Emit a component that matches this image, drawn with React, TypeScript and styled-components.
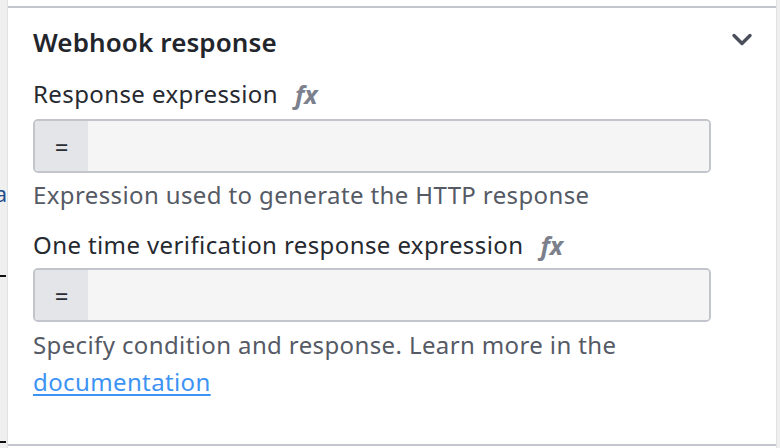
import React from 'react';
import styled, { createGlobalStyle } from 'styled-components';

const GlobalStyle = createGlobalStyle`
  html, body {
    margin: 0;
    padding: 0;
    background: #ffffff;
  }
  body {
    font-family: 'Noto Sans', 'Open Sans', sans-serif;
    -webkit-font-smoothing: antialiased;
  }
`;

const Page = styled.div`
  display: flex;
  width: 780px;
  height: 448px;
  overflow: hidden;
`;

const SideStrip = styled.div<{ $side: 'left' | 'right' }>`
  position: relative;
  flex: 0 0 ${(p) => (p.$side === 'left' ? '7px' : '3px')};
  background: #efeff0;
  border-${(p) => (p.$side === 'left' ? 'right' : 'left')}: 1px solid #e2e2e4;
  overflow: hidden;
`;

// bits of the page behind the panel that peek out at the left edge
const ClippedText = styled.span`
  position: absolute;
  top: 178px;
  right: 0;
  font-size: 22px;
  color: #1f4f8f;
`;

const ClippedRule = styled.span<{ $top: number }>`
  position: absolute;
  top: ${(p) => p.$top}px;
  left: 0;
  width: 6px;
  height: 2px;
  background: #111;
`;

const Panel = styled.section`
  flex: 1;
  margin-top: 6px;
  height: 440px;
  box-sizing: border-box;
  border-top: 2px solid #c3c5cd;
  border-bottom: 2px solid #c3c5cd;
  padding: 19px 23px 0 25px;
`;

const Header = styled.div`
  display: flex;
  align-items: center;
  justify-content: space-between;
  height: 30px;
`;

const Title = styled.h2`
  margin: 0;
  font-size: 26px;
  line-height: 30px;
  font-weight: 600;
  letter-spacing: 0.1px;
  color: #22252b;
`;

const Chevron = styled.svg`
  width: 22px;
  height: 14px;
  margin-bottom: 4px;
`;

const Field = styled.div`
  display: flex;
  flex-direction: column;
  width: 678px;
`;

const Label = styled.label<{ $gap: number }>`
  display: flex;
  align-items: center;
  gap: 17px;
  margin-top: ${(p) => p.$gap}px;
  height: 30px;
  font-size: 24px;
  line-height: 30px;
  letter-spacing: 0.4px;
  color: #262930;
`;

const Fx = styled.span`
  font-family: 'Noto Sans', sans-serif;
  font-style: italic;
  font-weight: 700;
  font-size: 25px;
  color: #7c808c;
  letter-spacing: 0;
`;

const InputBox = styled.div<{ $gap: number }>`
  display: flex;
  height: 54px;
  box-sizing: border-box;
  border: 2px solid #c3c5cd;
  border-radius: 5px;
  overflow: hidden;
  margin-top: ${(p) => p.$gap}px;
`;

const Prefix = styled.div`
  flex: 0 0 53px;
  display: flex;
  align-items: center;
  justify-content: center;
  background: #e4e5e9;
  font-size: 24px;
  color: #2a2d33;
`;

const Input = styled.input`
  flex: 1;
  border: none;
  outline: none;
  background: #f5f5f6;
  font-family: inherit;
  font-size: 22px;
  padding: 0 12px;
`;

const Help = styled.p<{ $gap: number }>`
  margin: ${(p) => p.$gap}px 0 0;
  font-size: 24px;
  line-height: 37px;
  letter-spacing: 0.38px;
  color: #555a65;
`;

const DocLink = styled.a`
  color: #3d93f4;
  text-decoration: underline;
  text-decoration-thickness: 2px;
  text-underline-offset: 3px;
`;

export default function App() {
  return (
    <>
      <GlobalStyle />
      <Page>
        <SideStrip $side="left">
          <ClippedText>a</ClippedText>
          <ClippedRule $top={275} />
          <ClippedRule $top={441} />
        </SideStrip>
        <Panel>
          <Header>
            <Title>Webhook response</Title>
            <Chevron viewBox="0 0 22 14">
              <path d="M3 2.5 L11 10.5 L19 2.5" fill="none" stroke="#4b4f5c" strokeWidth="3.4" strokeLinecap="round" strokeLinejoin="round" />
            </Chevron>
          </Header>
          <Field>
            <Label $gap={22}>
              Response expression <Fx>fx</Fx>
            </Label>
            <InputBox $gap={10}>
              <Prefix>=</Prefix>
              <Input />
            </InputBox>
            <Help $gap={3}>Expression used to generate the HTTP response</Help>
          </Field>
          <Field>
            <Label $gap={17}>
              One time verification response expression <Fx>fx</Fx>
            </Label>
            <InputBox $gap={8}>
              <Prefix>=</Prefix>
              <Input />
            </InputBox>
            <Help $gap={4}>
              Specify condition and response. Learn more in the
              <br />
              <DocLink href="#">documentation</DocLink>
            </Help>
          </Field>
        </Panel>
        <SideStrip $side="right" />
      </Page>
    </>
  );
}
